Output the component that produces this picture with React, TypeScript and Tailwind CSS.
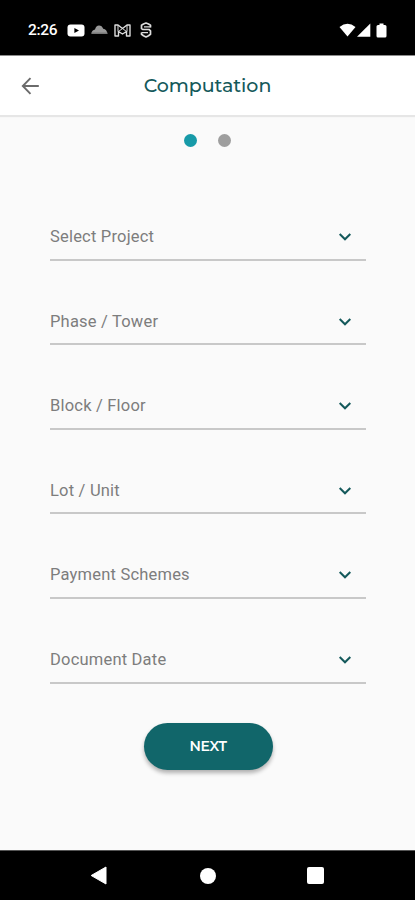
const fields = [
    'Select Project',
    'Phase / Tower',
    'Block / Floor',
    'Lot / Unit',
    'Payment Schemes',
    'Document Date',
];

const StatusBar = () => {
    return (
        <div className="h-14 shrink-0 flex items-center justify-between bg-black border-b border-[#8c8c8c] pt-[5px] pl-7 pr-[28px] text-white">
            <div className="flex items-center">
                <p className="w-[39px] text-[15.5px] leading-5 font-medium tracking-[-0.35px]">2:26</p>
                <svg className="w-[18px] h-[13px]" viewBox="0 0 18 13">
                    <rect x="0.5" y="0.5" width="17" height="12" rx="3" fill="#fff" />
                    <path d="M7.4 3.9 12 6.5 7.4 9.1Z" fill="#000" />
                </svg>
                <svg className="ml-[6px] w-[17px] h-[12px]" viewBox="0 0 17 12">
                    <path d="M0.500 9.500C0.500 7.400 2.200 5.800 4 5.500 4.700 3 6 1.500 8 1.500c2 0 3.500 1.200 4.200 3.300 2.400.3 4 2.300 4 4.700Z" fill="#999" />
                    <path d="M0.500 8.500h16v1.500H0.500Z" fill="#777" />
                </svg>
                <svg className="ml-[6px] w-[17px] h-[13px]" viewBox="0 0 17 13" fill="none" stroke="#ddd" strokeWidth="1.4" strokeLinejoin="round">
                    <path d="M1 1H4L8.500 4.500 13 1H16V12H12.500V7.500L8.500 10 4.500 7.500V12H1Z" />
                    <path d="M4 1V7.500M13 1V7.500M4.500 7.500 8.500 4.500 12.500 7.500" strokeWidth="1" />
                </svg>
                <svg className="ml-[9px] w-[12px] h-[16px]" viewBox="0 0 12 16" fill="none" stroke="#ddd" strokeWidth="1.7" strokeLinejoin="round">
                    <path d="M10.500 5.500V3.200L8.500 2 6 1 3.500 2 1.500 3.200V6.500L3 7.500H9L10.500 8.800V12.300L8.500 13.700 6 15 3.500 13.700 1.500 12.300V10.500" />
                    <path d="M4 4.800H10.500M1.500 10.700H8" strokeWidth="1.3" />
                </svg>
            </div>
            <div className="flex items-center">
                <svg className="w-[17px] h-[14px]" viewBox="0 0 17 14" fill="#fff">
                    <path d="M0.500 4Q8.500-2.500 16.500 4L8.500 13.500Z" />
                </svg>
                <svg className="w-[15px] h-[14px]" viewBox="0 0 15 14" fill="#fff">
                    <path d="M14.300 0.500V13.700H1Z" />
                </svg>
                <svg className="ml-[5px] w-[11px] h-[15px]" viewBox="0 0 11 15" fill="#fff">
                    <path d="M3.500 0.500h4v1.500H9a1.500 1.500 0 0 1 1.500 1.500v9.500A1.500 1.500 0 0 1 9 14.500H2A1.500 1.500 0 0 1 .5 13V3.500A1.500 1.500 0 0 1 2 2h1.500Z" />
                </svg>
            </div>
        </div>
    );
};

const Header = () => {
    return (
        <div className="h-[60px] shrink-0 grid grid-cols-[60px_1fr_60px] items-center bg-white border-b border-[#e6e6e6] shadow-[0_1px_1px_rgba(0,0,0,0.08)]">
            <button className="pl-[21px] cursor-pointer" aria-label="Back">
                <svg className="w-[19px] h-[18px]" viewBox="0 0 19 18" fill="none" stroke="#6b6b6b" strokeWidth="1.9">
                    <path d="M17.800 9H2M9.500 1.200 1.800 9 9.500 16.800" />
                </svg>
            </button>
            <p className="pt-px text-center font-['Montserrat','Inter',sans-serif] text-[19px] leading-6 font-medium tracking-[-0.05px] text-[#15595b]">Computation</p>
        </div>
    );
};

const SelectField = ({ label }: { label: string }) => {
    return (
        <div className="h-[84.6px] flex items-end">
            <button className="w-full h-[46px] flex items-center justify-between border-b-2 border-[#c8c8c8] pt-px pr-[14px] cursor-pointer">
                <span className="text-[16.5px] leading-6 tracking-[0.2px] text-[#7d7d7d]">{label}</span>
                <svg className="w-[14px] h-[10px]" viewBox="0 0 14 10" fill="none" stroke="#14595b" strokeWidth="2">
                    <path d="M1.700 2 7 7.300 12.300 2" />
                </svg>
            </button>
        </div>
    );
};

const NavigationBar = () => {
    return (
        <div className="h-[50px] shrink-0 flex items-center justify-between bg-black border-t border-[#555] pl-[90px] pr-[91px]">
            <svg className="w-[17px] h-[19px]" viewBox="0 0 17 19" fill="#fff" stroke="#fff" strokeLinejoin="round">
                <path d="M16 1V18L1.200 9.500Z" />
            </svg>
            <div className="ml-px w-4 h-4 rounded-full bg-white" />
            <div className="w-[17px] h-[17px] rounded-[2px] bg-white" />
        </div>
    );
};

const App = () => {
    return (
        <div className="w-full h-screen flex flex-col overflow-hidden bg-[#fafafa] font-['Roboto',sans-serif]">
            <StatusBar />
            <Header />
            <div className="flex-1 flex flex-col items-center pl-px">
                <div className="flex gap-[21px] pt-[18px] pr-px">
                    <div className="w-[13px] h-[13px] rounded-full bg-[#179aa8]" />
                    <div className="w-[13px] h-[13px] rounded-full bg-[#9e9e9e]" />
                </div>
                <div className="mt-[29px] w-[316px]">
                    {fields.map((label) => (
                        <SelectField key={label} label={label} />
                    ))}
                </div>
                <button className="mt-[39.4px] w-[129px] h-[47px] rounded-full bg-[#11666a] pt-px font-['Montserrat','Inter',sans-serif] text-[14px] font-semibold tracking-[-0.3px] text-white shadow-[0_3px_4px_rgba(0,0,0,0.3)] cursor-pointer">
                    NEXT
                </button>
            </div>
            <NavigationBar />
        </div>
    );
};

export default App;
